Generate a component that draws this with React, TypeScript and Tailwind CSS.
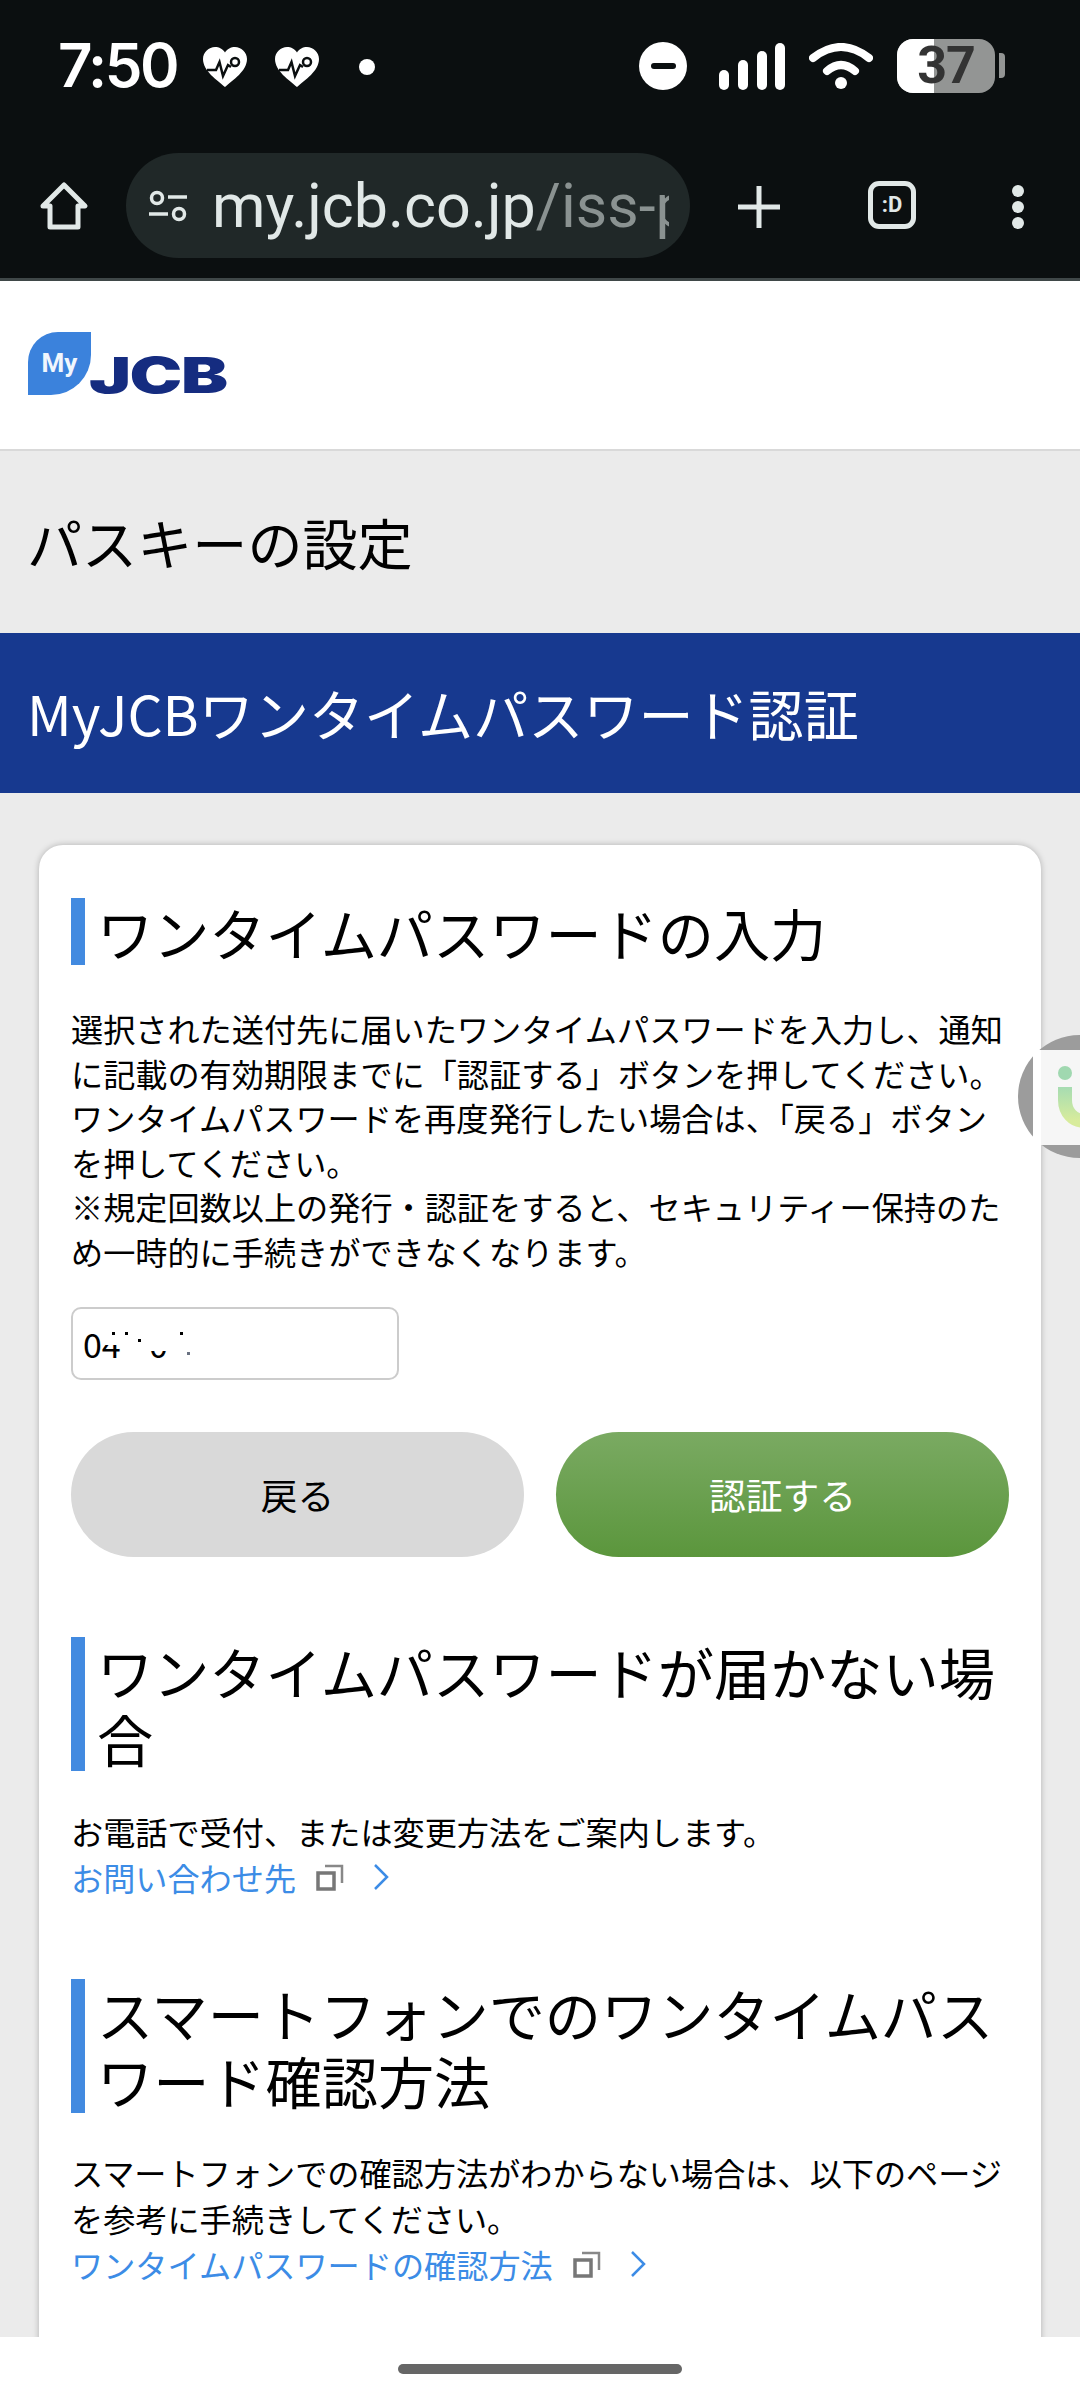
import React from 'react';

const jp = { fontFamily: '"Noto Sans CJK JP", "Noto Sans", sans-serif' };

const HeartPulse = () => (
  <svg width="44" height="40" viewBox="0 0 44 40">
    <path d="M22 40 C14 33 0 24 0 12 C0 5 6 0 12 0 C16 0 20 2 22 5.500 C24 2 28 0 32 0 C38 0 44 5 44 12 C44 24 30 33 22 40Z" fill="#fff" />
    <path d="M4 23 H13 L16.500 15 L20 29 L25 18 L28 20" fill="none" stroke="#0b0f10" strokeWidth="2.500" />
    <circle cx="32" cy="15" r="4" fill="#fff" stroke="#0b0f10" strokeWidth="2.500" />
  </svg>
);

const StatusBar = () => (
  <div className="flex h-[132px] items-start bg-[#0b0f10] text-white">
    <div className="ml-[58px] mt-[30px] w-[120px] whitespace-nowrap text-[60px] leading-[70px] font-semibold tracking-[-2.5px]" style={{ fontFamily: 'Inter, sans-serif' }}>7:50</div>
    <div className="ml-[25px] mt-[47px] flex gap-[28px]">
      <HeartPulse />
      <HeartPulse />
    </div>
    <div className="ml-[40px] mt-[59px] h-[16px] w-[16px] rounded-full bg-white" />
    <div className="ml-[264px] mt-[42px] flex h-[48px] w-[48px] items-center justify-center rounded-full bg-white">
      <div className="h-[6px] w-[25px] rounded-full bg-[#0b0f10]" />
    </div>
    <svg className="ml-[32px] mt-[43px]" width="66" height="47" viewBox="0 0 66 47" fill="#fff">
      <rect x="0" y="27" width="10" height="20" rx="5" />
      <rect x="19" y="17" width="10" height="30" rx="5" />
      <rect x="38" y="8" width="10" height="39" rx="5" />
      <rect x="56" y="0" width="10" height="47" rx="5" />
    </svg>
    <svg className="ml-[24px] mt-[43px]" width="64" height="47" viewBox="0 0 64 47" fill="none" stroke="#fff" strokeLinecap="round">
      <path d="M4 15 Q32 -7 60 15" strokeWidth="8" />
      <path d="M18 28 Q32 16 46 28" strokeWidth="8" />
      <circle cx="32" cy="40" r="6" fill="#fff" stroke="none" />
    </svg>
    <div className="relative ml-[24px] mt-[39px] h-[54px] w-[98px] rounded-[16px] bg-[#939594]">
      <div className="h-full w-[37px] rounded-l-[16px] bg-white" />
      <div className="absolute inset-0 flex items-center justify-center text-[52px] leading-[54px] font-bold tracking-[-1px] text-[#333]" style={{ fontFamily: 'Roboto, sans-serif' }}>37</div>
    </div>
    <div className="ml-[4px] mt-[53px] h-[25px] w-[6px] rounded-r-[4px] bg-[#939594]" />
  </div>
);

const Toolbar = () => (
  <div className="flex h-[149px] items-start border-b-[3px] border-[#3f4748] bg-[#0b0f10] text-[#e1e8e7]">
    <svg className="ml-[39px] mt-[49px]" width="50" height="50" viewBox="0 0 50 50" fill="none" stroke="#e1e8e7" strokeWidth="5" strokeLinejoin="round">
      <path d="M25 4 L46 25 H39 V46 H11 V25 H4 Z" />
    </svg>
    <div className="ml-[37px] mt-[21px] flex h-[105px] w-[564px] items-center overflow-hidden rounded-full bg-[#202828]">
      <svg className="ml-[23px] shrink-0" width="38" height="32" viewBox="0 0 38 32" fill="none" stroke="#e1e8e7" strokeWidth="3.500">
        <circle cx="8" cy="8" r="5.500" />
        <path d="M19 7 H38" />
        <path d="M0 24 H19" />
        <circle cx="30" cy="24" r="5.500" />
      </svg>
      <div className="ml-[25px] w-[457px] shrink-0 overflow-hidden whitespace-nowrap text-[61px] leading-[76px]" style={{ fontFamily: 'Roboto, sans-serif' }}>
        my.jcb.co.jp<span className="text-[#8a9291]">/iss-p</span>
      </div>
    </div>
    <svg className="ml-[47px] mt-[53px]" width="44" height="44" viewBox="0 0 44 44" stroke="#e1e8e7" strokeWidth="5">
      <path d="M22 1 V43 M1 22 H43" />
    </svg>
    <div className="ml-[87px] mt-[49px] flex h-[48px] w-[48px] items-center justify-center rounded-[11px] border-[5px] border-[#e1e8e7] text-[22px] font-bold leading-none" style={{ fontFamily: 'Roboto, sans-serif' }}>:D</div>
    <div className="ml-[96px] mt-[53px] flex flex-col gap-[4px]">
      <div className="h-[12px] w-[12px] rounded-full bg-[#e1e8e7]" />
      <div className="h-[12px] w-[12px] rounded-full bg-[#e1e8e7]" />
      <div className="h-[12px] w-[12px] rounded-full bg-[#e1e8e7]" />
    </div>
  </div>
);

const Logo = () => (
  <div className="flex h-[170px] items-start border-b-2 border-[#d9d9d9] bg-white pl-[28px] pt-[51px]">
    <div className="flex h-[63px] w-[63px] items-center justify-center rounded-tl-[30px] rounded-br-[40px] bg-[#3b82dc] text-[26px] font-bold text-[#f0f6fd]" style={{ fontFamily: 'Roboto, sans-serif' }}>My</div>
    <div className="-ml-[2px] mt-[17px] w-[135px] origin-left scale-x-[1.44] text-[49px] font-black leading-[54px] tracking-[-1px] text-[#152c80]" style={{ fontFamily: 'Inter, sans-serif' }}>JCB</div>
  </div>
);

const SectionHeading = ({ children }: { children: React.ReactNode }) => (
  <h2 className="border-l-[14px] border-[#428ae0] pl-[12px] text-[56.2px] leading-[67px] text-black">{children}</h2>
);

const ExternalLink = ({ children }: { children: React.ReactNode }) => (
  <a className="flex h-[46px] items-center text-[32.16px] leading-[46px] text-[#3c8ce6]">
    {children}
    <svg className="ml-[20px]" width="28" height="28" viewBox="0 0 28 28" fill="none">
      <rect x="2" y="10" width="16" height="16" stroke="#777" strokeWidth="3.500" />
      <path d="M9 3 H26 V20" stroke="#888" strokeWidth="2.500" />
    </svg>
    <svg className="ml-[28px]" width="18" height="28" viewBox="0 0 18 28" fill="none" stroke="#3c8ce6" strokeWidth="2.500">
      <path d="M3 2 L15 14 L3 26" />
    </svg>
  </a>
);

export default function App() {
  return (
    <div className="relative flex h-[2400px] w-[1080px] flex-col overflow-hidden bg-white" style={jp}>
      <StatusBar />
      <Toolbar />
      <div className="min-h-0 flex-1 overflow-hidden bg-[#ebebeb]">
        <Logo />
        <h1 className="h-[182px] pl-[27px] pt-[55px] text-[55.1px] leading-[70px] text-black">パスキーの設定</h1>
        <div className="h-[160px] bg-[#17398f] pl-[27px] pt-[44px] text-[55.1px] leading-[70px] text-white">MyJCBワンタイムパスワード認証</div>
        <div className="mx-[39px] mt-[52px] rounded-[24px] bg-white px-[32px] pb-[80px] pt-[53px] shadow-[0_0_6px_rgba(0,0,0,0.25)]">
          <SectionHeading>ワンタイムパスワードの入力</SectionHeading>
          <p className="mt-[41px] text-[32.16px] leading-[44.500px] text-black">
            選択された送付先に届いたワンタイムパスワードを入力し、通知に記載の有効期限までに「認証する」ボタンを押してください。<br />
            ワンタイムパスワードを再度発行したい場合は、「戻る」ボタンを押してください。<br />
            ※規定回数以上の発行・認証をすると、セキュリティー保持のため一時的に手続きができなくなります。
          </p>
          {/* the digits are partly blanked out in the picture */}
          <div className="relative mt-[34px] h-[73px] w-[328px] overflow-hidden rounded-[10px] border-2 border-[#cccccc] text-[34px] leading-[40px] text-black">
            <span className="absolute left-[10px] top-[15px]">04</span>
            <span className="absolute left-[76px] top-[15px]">0</span>
            <div className="absolute left-[29px] top-[15px] h-[21px] w-[130px] bg-white" />
            <div className="absolute left-[76px] top-[36px] h-[6px] w-[22px] bg-white" />
            <div className="absolute left-[39px] top-[23px] h-[3px] w-[3px] bg-black" />
            <div className="absolute left-[52px] top-[23px] h-[3px] w-[3px] bg-black" />
            <div className="absolute left-[65px] top-[30px] h-[3px] w-[3px] bg-black" />
            <div className="absolute left-[107px] top-[23px] h-[3px] w-[3px] bg-black" />
            <div className="absolute left-[114px] top-[43px] h-[3px] w-[3px] bg-gray-500" />
          </div>
          <div className="mt-[52px] flex gap-[32px]">
            <button className="h-[125px] flex-1 rounded-full bg-[#d9d9d9] text-[36.75px] text-black">戻る</button>
            <button className="h-[125px] flex-1 rounded-full bg-gradient-to-b from-[#7aaa62] to-[#5b963c] text-[36.75px] text-white">認証する</button>
          </div>
          <div className="mt-[80px]">
            <SectionHeading>ワンタイムパスワードが届かない場合</SectionHeading>
          </div>
          <p className="mt-[37px] text-[32.16px] leading-[46px] text-black">お電話で受付、または変更方法をご案内します。</p>
          <ExternalLink>お問い合わせ先</ExternalLink>
          <div className="mt-[79px]">
            <SectionHeading>スマートフォンでのワンタイムパスワード確認方法</SectionHeading>
          </div>
          <p className="mt-[36px] text-[32.16px] leading-[46px] text-black">スマートフォンでの確認方法がわからない場合は、以下のページを参考に手続きしてください。</p>
          <ExternalLink>ワンタイムパスワードの確認方法</ExternalLink>
        </div>
      </div>
      <div className="flex h-[63px] items-start justify-center bg-white pt-[27px]">
        <div className="h-[10px] w-[284px] rounded-full bg-[#666666]" />
      </div>
      {/* floating widget tab over the page edge */}
      <div className="absolute left-[1018px] top-[1035px] h-[123px] w-[123px] rounded-full bg-[#9c9c9c]">
        <div className="absolute left-[15px] top-[15px] h-[95px] w-[108px] border-l-8 border-white bg-[#f6f6f6]">
          <svg className="absolute left-[17px] top-[16px]" width="54" height="62" viewBox="0 0 54 62" fill="none">
            <defs>
              <linearGradient id="widgetU" x1="0" y1="0" x2="0" y2="1">
                <stop offset="0" stopColor="#a6dcb2" />
                <stop offset="1" stopColor="#d8ec9c" />
              </linearGradient>
            </defs>
            <circle cx="7" cy="7" r="7" fill="#a0d8b0" />
            <path d="M7 21 V34 C7 46 15 55 27 55 C39 55 47 46 47 34 V21" stroke="url(#widgetU)" strokeWidth="14" />
          </svg>
        </div>
      </div>
    </div>
  );
}
